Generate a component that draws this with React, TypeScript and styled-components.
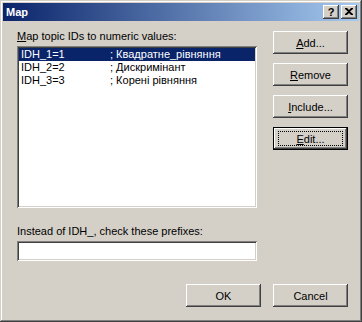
import React from "react";
import styled, { createGlobalStyle } from "styled-components";

const face = "#d4d0c8";

const GlobalStyle = createGlobalStyle`
  html, body {
    margin: 0;
    padding: 0;
    background: ${face};
  }
  * {
    box-sizing: border-box;
  }
`;

type Entry = {
  id: string;
  comment: string;
};

const entries: Array<Entry> = [
  { id: "IDH_1=1", comment: "; Квадратне_рівняння" },
  { id: "IDH_2=2", comment: "; Дискримінант" },
  { id: "IDH_3=3", comment: "; Корені рівняння" },
];

const App = () => {
  return (
    <>
      <GlobalStyle />
      <Window>
        <TitleBar>
          <Title>Map</Title>
          <CaptionButtons>
            <CaptionButton>?</CaptionButton>
            <CaptionButton>
              <svg width="8" height="7" viewBox="0 0 8 7">
                <path
                  d="M0 0h2l2 2 2-2h2v1L5 3.5 8 6v1H6L4 5 2 7H0V6l3-2.5L0 1z"
                  fill="#000"
                />
              </svg>
            </CaptionButton>
          </CaptionButtons>
        </TitleBar>
        <Body>
          <MainRow>
            <LeftColumn>
              <Label>
                <u>M</u>ap topic IDs to numeric values:
              </Label>
              <ListBox>
                {entries.map((cur, idx) => (
                  <ListRow key={idx} selected={idx === 0}>
                    <IdCell>{cur.id}</IdCell>
                    <span>{cur.comment}</span>
                  </ListRow>
                ))}
              </ListBox>
              <Label className="second">Instead of IDH_, check these prefixes:</Label>
              <TextField />
            </LeftColumn>
            <ButtonColumn>
              <Button>
                <u>A</u>dd...
              </Button>
              <Button>
                <u>R</u>emove
              </Button>
              <Button>
                <u>I</u>nclude...
              </Button>
              <Button isDefault>
                <Focus>
                  <u>E</u>dit...
                </Focus>
              </Button>
            </ButtonColumn>
          </MainRow>
          <Footer>
            <Button>OK</Button>
            <Button>Cancel</Button>
          </Footer>
        </Body>
      </Window>
    </>
  );
};

const Window = styled.div`
  width: 362px;
  height: 322px;
  padding: 3px;
  display: flex;
  flex-direction: column;
  background: ${face};
  box-shadow: inset -1px -1px #404040, inset 1px 1px ${face},
    inset -2px -2px #808080, inset 2px 2px #ffffff;
  font-family: "Liberation Sans", Arial, sans-serif;
  font-size: 11px;
  color: #000;
`;

const TitleBar = styled.div`
  height: 18px;
  display: flex;
  align-items: center;
  justify-content: space-between;
  padding: 0 2px 0 3px;
  background: linear-gradient(to right, #0a246a, #a6caf0);
`;

const Title = styled.span`
  color: #fff;
  font-weight: bold;
  font-size: 11px;
  font-family: "Liberation Sans", Arial, sans-serif;
`;

const CaptionButtons = styled.div`
  display: flex;
  gap: 2px;
`;

const CaptionButton = styled.div`
  width: 16px;
  height: 14px;
  display: flex;
  align-items: center;
  justify-content: center;
  background: ${face};
  box-shadow: inset -1px -1px #404040, inset 1px 1px #ffffff,
    inset -2px -2px #808080, inset 2px 2px ${face};
  font-weight: bold;
  font-size: 11px;
  line-height: 14px;
  padding-bottom: 1px;
`;

const Body = styled.div`
  flex: 1;
  display: flex;
  flex-direction: column;
  padding: 9px 11px 0 14px;
`;

const MainRow = styled.div`
  display: flex;
  gap: 16px;
`;

const LeftColumn = styled.div`
  width: 240px;
  display: flex;
  flex-direction: column;
  & > .second {
    margin-top: 17px;
  }
`;

const Label = styled.div`
  line-height: 13px;
  height: 13px;
  margin-bottom: 3px;
  white-space: nowrap;
`;

const sunken = `
  box-shadow: inset 1px 1px #808080, inset -1px -1px #ffffff,
    inset 2px 2px #404040, inset -2px -2px ${face};
`;

const ListBox = styled.div`
  height: 162px;
  background: #fff;
  padding: 2px;
  ${sunken}
`;

const ListRow = styled.div<{ selected?: boolean }>`
  display: flex;
  height: 13px;
  line-height: 13px;
  padding-left: 2px;
  white-space: nowrap;
  background: ${(p) => (p.selected ? "#0a246a" : "transparent")};
  color: ${(p) => (p.selected ? "#fff" : "#000")};
`;

const IdCell = styled.span`
  width: 89px;
`;

const TextField = styled.div`
  height: 20px;
  background: #fff;
  ${sunken}
`;

const ButtonColumn = styled.div`
  padding-top: 1px;
  display: flex;
  flex-direction: column;
  gap: 9px;
`;

const Button = styled.div<{ isDefault?: boolean }>`
  width: 75px;
  height: 23px;
  display: flex;
  align-items: center;
  justify-content: center;
  background: ${face};
  white-space: nowrap;
  box-shadow: ${(p) =>
    p.isDefault
      ? `inset 0 0 0 1px #000, inset -2px -2px #404040, inset 2px 2px #ffffff, inset -3px -3px #808080, inset 3px 3px ${face}`
      : `inset -1px -1px #404040, inset 1px 1px #ffffff, inset -2px -2px #808080, inset 2px 2px ${face}`};
`;

const Focus = styled.div`
  width: 65px;
  height: 15px;
  display: flex;
  align-items: center;
  justify-content: center;
  border: 1px dotted #000;
`;

const Footer = styled.div`
  margin-top: 23px;
  display: flex;
  justify-content: flex-end;
  gap: 12px;
`;

export default App;
